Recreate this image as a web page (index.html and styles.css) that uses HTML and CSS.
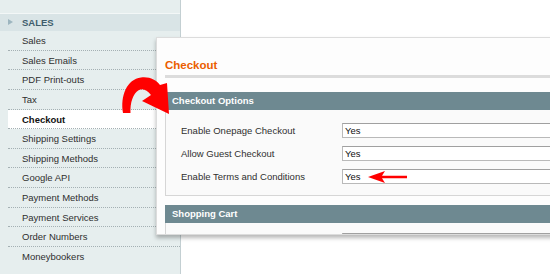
FILE: index.html
```html
<!DOCTYPE html>
<html lang="en">
<head>
    <meta charset="UTF-8">
    <title>Checkout Configuration</title>
    <link rel="stylesheet" href="styles.css">
</head>
<body>
<div class="page">
    <div class="sidebar">
        <div class="side-top"></div>
        <div class="side-head">SALES</div>
        <ul class="side-list">
            <li>Sales</li>
            <li>Sales Emails</li>
            <li>PDF Print-outs</li>
            <li>Tax</li>
            <li class="active">Checkout</li>
            <li>Shipping Settings</li>
            <li>Shipping Methods</li>
            <li>Google API</li>
            <li>Payment Methods</li>
            <li>Payment Services</li>
            <li>Order Numbers</li>
            <li>Moneybookers</li>
        </ul>
    </div>
    <div class="main"></div>
</div>

<div class="popup">
    <h2 class="title">Checkout</h2>

    <div class="section">
        <div class="section-head">Checkout Options</div>
        <div class="section-body">
            <div class="row">
                <span class="label">Enable Onepage Checkout</span>
                <span class="field">Yes</span>
            </div>
            <div class="row">
                <span class="label">Allow Guest Checkout</span>
                <span class="field">Yes</span>
            </div>
            <div class="row">
                <span class="label">Enable Terms and Conditions</span>
                <span class="field">Yes</span>
            </div>
        </div>
    </div>

    <div class="section">
        <div class="section-head">Shopping Cart</div>
        <div class="section-body short">
            <div class="row">
                <span class="label"></span>
                <span class="field"></span>
            </div>
        </div>
    </div>
</div>

<!-- red pointer arrows drawn over the screenshot -->
<svg class="marks" width="550" height="274" viewBox="0 0 550 274">
    <path d="M123,113 C120,96 127,79 141,77.5 C150,76.5 156,80 160,85 L167,83 L169,114 L142,101 L151,95 C147,90 143,88 139,90 C133,93 130,103 130.5,113 Z" fill="#f00"/>
    <path d="M368,177 L385,171 L382,175.8 L407,175.8 L407,178.2 L382,178.2 L385,183 Z" fill="#f00"/>
</svg>
</body>
</html>
```

FILE: styles.css
```css
* {
    padding: 0;
    margin: 0;
    list-style: none;
    box-sizing: border-box;
}

body {
    width: 550px;
    height: 274px;
    overflow: hidden;
    position: relative;
    background: #fff;
    font-family: "Liberation Sans", Arial, Helvetica, sans-serif;
    font-size: 9.5px;
    color: #2f2f2f;
}

.page {
    display: flex;
    height: 274px;
}

.sidebar {
    width: 181px;
    background: #e6eeee;
    border-right: 1px solid #c3cfd2;
}

.side-top {
    height: 14px;
    border-bottom: 1px solid #f3f7f7;
}

.side-head {
    height: 17px;
    line-height: 17px;
    padding-left: 22px;
    background: #d9e4e6;
    color: #3e5d6c;
    font-weight: bold;
    position: relative;
}

.side-head::before {
    content: "";
    position: absolute;
    left: 8px;
    top: 5px;
    border-left: 5px solid #9db5bf;
    border-top: 3.5px solid transparent;
    border-bottom: 3.5px solid transparent;
}

.side-list li {
    height: 19.64px;
    line-height: 19px;
    margin-left: 8px;
    padding-left: 14px;
    border-bottom: 1px dotted #a4b0b3;
}

.side-list li:last-child {
    border-bottom: 0;
}

.side-list li.active {
    background: #fff;
    font-weight: bold;
    color: #111;
}

.main {
    flex: 1;
}

.popup {
    position: absolute;
    left: 156px;
    top: 37px;
    width: 430px;
    height: 198px;
    overflow: hidden;
    background: #fdfdfd;
    border: 1px solid #dcdcdc;
    box-shadow: 0 3px 4px rgba(0, 0, 0, 0.28);
    padding-left: 8px;
}

.title {
    margin-top: 20px;
    padding-bottom: 3px;
    border-bottom: 3px solid #dcdcdc;
    font-size: 11.5px;
    line-height: 14px;
    color: #eb5e00;
}

.section {
    margin-top: 14px;
}

.section + .section {
    margin-top: 9px;
}

.section-head {
    height: 18px;
    line-height: 18px;
    padding-left: 7px;
    background: #6e8991;
    color: #fff;
    font-weight: bold;
}

.section-body {
    display: flex;
    flex-direction: column;
    gap: 8px;
    padding: 13px 0 11px 15px;
    background: #fafafa;
    border: 1px solid #d6d6d6;
    border-top: 0;
}

.section-body.short {
    height: 12px;
    padding-top: 10px;
    overflow: hidden;
    border-bottom: 0;
}

.row {
    display: flex;
    align-items: center;
    height: 15px;
}

.label {
    width: 161px;
}

.field {
    flex: 1;
    height: 15px;
    line-height: 13px;
    padding-left: 2px;
    background: #fff;
    border: 1px solid #b9b9b9;
    border-top-color: #a0a0a0;
    color: #111;
}

.marks {
    position: absolute;
    left: 0;
    top: 0;
    pointer-events: none;
}
```
